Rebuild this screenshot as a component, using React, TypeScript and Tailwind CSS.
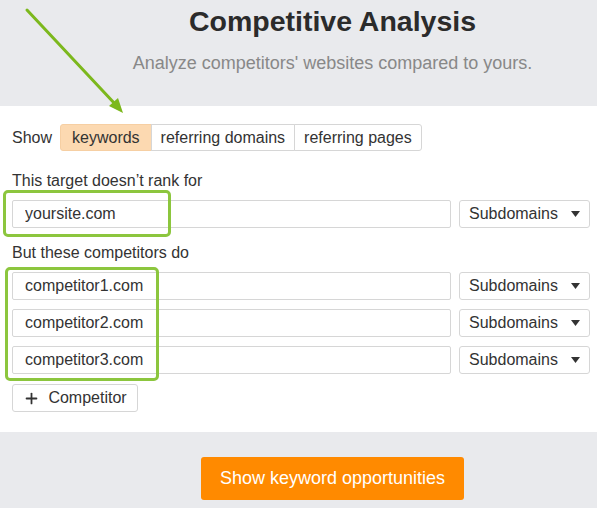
import { Plus } from 'lucide-react';

function Caret() {
  return (
    <svg width="9" height="6" viewBox="0 0 9 6" className="ml-[13px]">
      <path d="M0 0 L9 0 L4.5 6 Z" fill="#333" />
    </svg>
  );
}

function Row({ value }: { value: string }) {
  return (
    <div className="flex gap-2">
      <input
        readOnly
        value={value}
        className="h-[28px] flex-1 border border-[#d6d6d6] rounded-[2px] px-3 text-[16px] text-[#333] outline-none"
      />
      <button className="h-[28px] w-[131px] flex items-center justify-center border border-[#d6d6d6] rounded-[3px] text-[16px] text-[#333] bg-white">
        Subdomains
        <Caret />
      </button>
    </div>
  );
}

export default function App() {
  const tabs = ['keywords', 'referring domains', 'referring pages'];
  return (
    <div className="relative w-[597px] h-[508px] bg-[#e9eaed] overflow-hidden font-['Liberation_Sans',Arial,sans-serif]">
      {/* header */}
      <div className="h-[106px] pl-[68px] pt-[4px] text-center">
        <h1 className="text-[28.5px] leading-[34px] font-bold text-[#2b2b2b]">Competitive Analysis</h1>
        <p className="mt-[14px] text-[18px] leading-[22px] text-[#888]">
          Analyze competitors' websites compared to yours.
        </p>
      </div>

      {/* form */}
      <div className="bg-white h-[326px] pl-3 pr-[7px] pt-[18px]">
        <div className="flex items-center">
          <span className="text-[16px] text-[#333] mr-[8px]">Show</span>
          <div className="flex">
            {tabs.map((t, i) => (
              <button
                key={t}
                className={`h-[27px] text-[16px] text-[#333] border ${
                  i === 0
                    ? 'bg-[#fcd9b1] border-[#f6cfa3] rounded-l-[3px] px-[11px]'
                    : 'bg-white border-[#d6d6d6] -ml-px px-[9px]'
                } ${i === tabs.length - 1 ? 'rounded-r-[3px]' : ''}`}
              >
                {t}
              </button>
            ))}
          </div>
        </div>

        <div className="mt-[20px] text-[16px] leading-[20px] text-[#333]">This target doesn’t rank for</div>
        <div className="mt-[9px]">
          <Row value="yoursite.com" />
        </div>

        <div className="mt-[15px] text-[16px] leading-[20px] text-[#333]">But these competitors do</div>
        <div className="mt-[9px] flex flex-col gap-[9px]">
          <Row value="competitor1.com" />
          <Row value="competitor2.com" />
          <Row value="competitor3.com" />
        </div>

        <button className="mt-[10px] h-[28px] w-[126px] flex items-center justify-center gap-[8px] border border-[#d6d6d6] rounded-[3px] text-[16px] text-[#333]">
          <Plus size={17} strokeWidth={2.5} className="text-[#333]" />
          Competitor
        </button>
      </div>

      {/* bottom */}
      <div className="flex justify-center pl-[68px] pt-[25px]">
        <button className="h-[43px] w-[263px] bg-[#ff8a00] rounded-[3px] text-white text-[18px]">
          Show keyword opportunities
        </button>
      </div>

      {/* highlights */}
      <div className="absolute left-[3px] top-[190px] w-[168px] h-[47px] border-[3px] border-[#8cc63e] rounded-[5px] pointer-events-none" />
      <div className="absolute left-[5px] top-[267px] w-[154px] h-[114px] border-[3px] border-[#8cc63e] rounded-[5px] pointer-events-none" />

      {/* arrow */}
      <svg className="absolute left-0 top-0 pointer-events-none" width="140" height="120">
        <line x1="27" y1="10" x2="116" y2="105" stroke="#7cb81d" strokeWidth="3" strokeLinecap="round" />
        <path d="M123 113 L109 106 L118 98 Z" fill="#7cb81d" />
      </svg>
    </div>
  );
}
